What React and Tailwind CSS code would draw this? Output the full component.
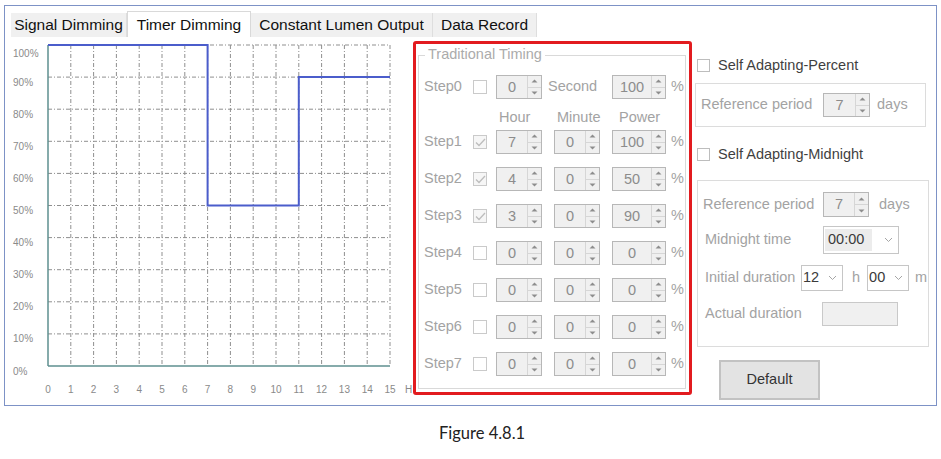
import React from "react";

const hours = Array.from({ length: 16 }, (_, i) => i);
const pcts = [100, 90, 80, 70, 60, 50, 40, 30, 20, 10, 0];

const X0 = 43;
const X1 = 385;
const Y0 = 8;
const Y1 = 329;
const hx = (h) => X0 + ((X1 - X0) / 15) * h;
const py = (p) => Y1 - ((Y1 - Y0) / 100) * p;

function Chart() {
    const line = `M${X0},${py(100)} H${hx(7)} V${py(50)} H${hx(11)} V${py(90)} H${X1}`;
    return (
        <svg width="408" height="367" className="shrink-0" style={{ fontFamily: '"Liberation Sans", Arial, sans-serif' }}>
            {hours.slice(1).map((h) => (
                <line key={"v" + h} x1={hx(h)} y1={Y0} x2={hx(h)} y2={Y1} stroke="#8f8f8f" strokeWidth="1" strokeDasharray="4 2 1 2" />
            ))}
            {pcts.slice(0, 10).map((p) => (
                <line key={"h" + p} x1={X0} y1={py(p)} x2={X1} y2={py(p)} stroke="#8f8f8f" strokeWidth="1" strokeDasharray="4 2 1 2" />
            ))}
            <line x1={X0} y1={Y0} x2={X0} y2={Y1} stroke="#5e8f8f" strokeWidth="1.5" />
            <line x1={X0} y1={Y1} x2={X1} y2={Y1} stroke="#5e8f8f" strokeWidth="1.5" />
            <path d={line} fill="none" stroke="#4b5dcb" strokeWidth="2" />
            {pcts.map((p) => (
                <text key={"t" + p} x="8" y={Math.max(py(p) + 8.5, 20)} fontSize="10" fill="#8a8a8a">
                    {p}%
                </text>
            ))}
            {hours.map((h) => (
                <text key={"x" + h} x={hx(h)} y="356" fontSize="10" fill="#8a8a8a" textAnchor="middle">
                    {h}
                </text>
            ))}
            <text x="400" y="356" fontSize="10" fill="#8a8a8a">H</text>
        </svg>
    );
}

function Arrow({ up }) {
    return (
        <svg width="7" height="4" viewBox="0 0 7 4">
            <path d={up ? "M0.5 3.5 L3.5 0.5 L6.5 3.5 Z" : "M0.5 0.5 L3.5 3.5 L6.5 0.5 Z"} fill="#8d8d8d" />
        </svg>
    );
}

function Spin({ value, className }) {
    return (
        <div className={"flex h-[24px] shrink-0 border border-[#b7b7b7] bg-[#f0f0f0] " + className}>
            <span className="flex-1 text-center leading-[22px] text-[#8c8c8c]">{value}</span>
            <div className="flex w-[14px] flex-col border-l border-[#d6d6d6]">
                <span className="flex flex-1 items-center justify-center border-b border-[#d6d6d6]">
                    <Arrow up />
                </span>
                <span className="flex flex-1 items-center justify-center">
                    <Arrow />
                </span>
            </div>
        </div>
    );
}

function Check({ checked }) {
    return (
        <span className={"flex h-[14px] w-[14px] shrink-0 items-center justify-center border border-[#cacaca] " + (checked ? "bg-[#f6f6f6]" : "bg-white")}>
            {checked && (
                <svg width="11" height="9" viewBox="0 0 11 9">
                    <path d="M1 4.5 L4 7.5 L10 1" fill="none" stroke="#bdbdbd" strokeWidth="1.3" />
                </svg>
            )}
        </span>
    );
}

function Chevron() {
    return (
        <svg width="9" height="6" viewBox="0 0 9 6">
            <path d="M1 1 L4.5 4.5 L8 1" fill="none" stroke="#a5a5a5" strokeWidth="1" />
        </svg>
    );
}

function StepRow({ n, checked, h, m, p, className }) {
    return (
        <div className={"flex h-[24px] items-center " + className}>
            <span className="w-[49px] shrink-0">Step{n}</span>
            <Check checked={checked} />
            <Spin value={h} className="ml-[9px] w-[46px]" />
            <Spin value={m} className="ml-[12px] w-[46px]" />
            <Spin value={p} className="ml-[12px] w-[54px]" />
            <span className="ml-[5px]">%</span>
        </div>
    );
}

const steps = [
    { n: 1, checked: true, h: 7, m: 0, p: 100 },
    { n: 2, checked: true, h: 4, m: 0, p: 50 },
    { n: 3, checked: true, h: 3, m: 0, p: 90 },
    { n: 4, checked: false, h: 0, m: 0, p: 0 },
    { n: 5, checked: false, h: 0, m: 0, p: 0 },
    { n: 6, checked: false, h: 0, m: 0, p: 0 },
    { n: 7, checked: false, h: 0, m: 0, p: 0 },
];

function TraditionalTiming() {
    return (
        <div className="mt-[4px] h-[354px] w-[279px] shrink-0 rounded-[3px] border-[3px] border-[#e21b1f]">
            <div className="relative ml-[2px] mt-[11px] h-[334px] w-[268px] border border-[#d9d9d9] pl-[5px] text-[14.5px] text-[#a3a3a3]">
                <span className="absolute left-[6px] top-[-10px] bg-white px-[3px] leading-[17px] text-[#ababab]">Traditional Timing</span>
                <div className="mt-[19px] flex h-[24px] items-center">
                    <span className="w-[49px] shrink-0">Step0</span>
                    <Check />
                    <Spin value={0} className="ml-[9px] w-[46px]" />
                    <span className="w-[70px] shrink-0 pl-[6px]">Second</span>
                    <Spin value={100} className="w-[54px]" />
                    <span className="ml-[5px]">%</span>
                </div>
                <div className="mt-[10px] flex h-[17px] items-center leading-[17px]">
                    <span className="w-[75px] shrink-0" />
                    <span className="w-[58px] shrink-0">Hour</span>
                    <span className="w-[62px] shrink-0">Minute</span>
                    <span>Power</span>
                </div>
                {steps.map((s, i) => (
                    <StepRow key={s.n} {...s} className={i === 0 ? "mt-[4px]" : "mt-[13px]"} />
                ))}
            </div>
        </div>
    );
}

function Dropdown({ value, className, highlight }) {
    return (
        <div className={"flex shrink-0 items-center border border-[#c6c6c6] bg-white " + className}>
            <span className={"text-[#3a3a3a] " + (highlight ? "ml-[1px] bg-[#ececec] px-[3px] pr-[8px]" : "pl-[1px]")}>{value}</span>
            <span className="ml-auto mr-[5px] flex items-center">
                <Chevron />
            </span>
        </div>
    );
}

function RightPanel() {
    return (
        <div className="flex flex-col text-[14.5px] text-[#a3a3a3]">
            <div className="ml-[5px] mt-[20px] flex h-[17px] items-center">
                <span className="h-[13px] w-[13px] border border-[#bdbdbd] bg-white" />
                <span className="ml-[8px] text-[#3f3f3f]">Self Adapting-Percent</span>
            </div>
            <div className="ml-[3px] mt-[9px] flex h-[44px] w-[231px] items-center border border-[#dcdcdc] pl-[5px]">
                <span className="w-[122px] shrink-0">Reference period</span>
                <Spin value={7} className="w-[47px]" />
                <span className="ml-[7px]">days</span>
            </div>
            <div className="ml-[5px] mt-[19px] flex h-[17px] items-center">
                <span className="h-[13px] w-[13px] border border-[#bdbdbd] bg-white" />
                <span className="ml-[8px] text-[#3f3f3f]">Self Adapting-Midnight</span>
            </div>
            <div className="ml-[5px] mt-[17px] flex h-[167px] w-[232px] flex-col border border-[#dcdcdc] pl-[5px]">
                <div className="mt-[11px] flex h-[25px] items-center">
                    <span className="w-[120px] shrink-0">Reference period</span>
                    <Spin value={7} className="h-[25px] w-[46px]" />
                    <span className="ml-[10px]">days</span>
                </div>
                <div className="mt-[9px] flex h-[28px] items-center">
                    <span className="w-[120px] shrink-0 pl-[2px]">Midnight time</span>
                    <Dropdown value="00:00" className="h-[28px] w-[76px]" highlight />
                </div>
                <div className="mt-[11px] flex h-[26px] items-center">
                    <span className="w-[98px] shrink-0 pl-[2px]">Initial duration</span>
                    <Dropdown value="12" className="h-[26px] w-[42px]" />
                    <span className="ml-[9px]">h</span>
                    <Dropdown value="00" className="ml-[7px] h-[26px] w-[42px]" />
                    <span className="ml-[6px]">m</span>
                </div>
                <div className="mt-[11px] flex h-[24px] items-center">
                    <span className="w-[119px] shrink-0 pl-[2px]">Actual duration</span>
                    <span className="h-[24px] w-[76px] border border-[#c9c9c9] bg-[#f0f0f0]" />
                </div>
            </div>
            <button className="ml-[27px] mt-[13px] h-[40px] w-[101px] border-2 border-[#c2c2c2] bg-[#e3e3e3] text-[14.5px] text-[#333]">
                Default
            </button>
        </div>
    );
}

const tabs = [
    { label: "Signal Dimming", w: "w-[116px]" },
    { label: "Timer Dimming", w: "w-[124px]", active: true },
    { label: "Constant Lumen Output", w: "w-[182px]" },
    { label: "Data Record", w: "w-[104px]" },
];

export default function App() {
    return (
        <div className="h-[459px] w-[941px] bg-white pt-[5px]" style={{ fontFamily: '"Liberation Sans", Arial, sans-serif' }}>
            <div className="ml-[4px] flex h-[401px] w-[933px] flex-col border border-[#7d92c6] bg-white">
                <div className="flex h-[31px] items-end pl-[6px]">
                    {tabs.map((t) =>
                        t.active ? (
                            <div key={t.label} className={"flex h-[26px] items-center justify-center border-x border-t border-[#d9d9d9] bg-white text-[15.5px] text-[#111] " + t.w}>
                                {t.label}
                            </div>
                        ) : (
                            <div key={t.label} className={"flex h-[24px] items-center justify-center border-r border-[#dedede] bg-[#f0f0f0] text-[15.5px] text-[#111] " + t.w}>
                                {t.label}
                            </div>
                        )
                    )}
                </div>
                <div className="flex flex-1">
                    <Chart />
                    <TraditionalTiming />
                    <RightPanel />
                </div>
            </div>
            <p className="ml-[439px] mt-[17px] text-[16.5px] leading-[20px] text-[#222]" style={{ fontFamily: "Lato, Carlito, sans-serif" }}>
                Figure 4.8.1
            </p>
        </div>
    );
}
